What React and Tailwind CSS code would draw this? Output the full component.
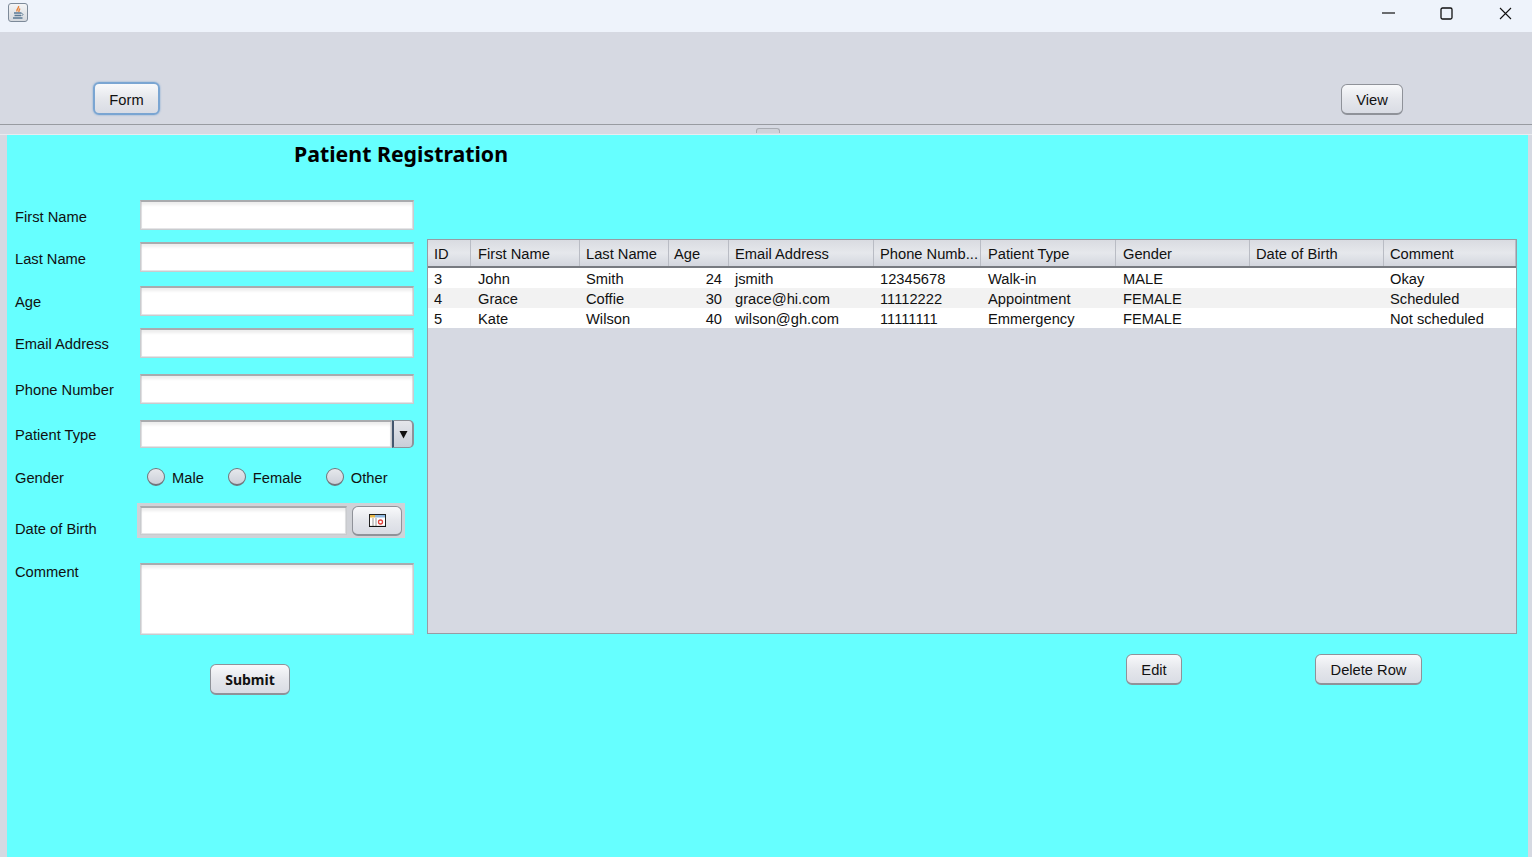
import React from "react";

const columns = ["ID", "First Name", "Last Name", "Age", "Email Address", "Phone Numb...", "Patient Type", "Gender", "Date of Birth", "Comment"];

const rows = [
  ["3", "John", "Smith", "24", "jsmith", "12345678", "Walk-in", "MALE", "", "Okay"],
  ["4", "Grace", "Coffie", "30", "grace@hi.com", "11112222", "Appointment", "FEMALE", "", "Scheduled"],
  ["5", "Kate", "Wilson", "40", "wilson@gh.com", "11111111", "Emmergency", "FEMALE", "", "Not scheduled"],
];

// left padding per column, the header and the cells start at the same x
const colPad = ["pl-[6px]", "pl-[7px]", "pl-[6px]", "pl-[5px]", "pl-[6px]", "pl-[6px]", "pl-[7px]", "pl-[7px]", "pl-[6px]", "pl-[6px]"];

const gridCols = "grid grid-cols-[43px_109px_89px_60px_145px_107px_135px_134px_134px_132px]";
const fieldBox = "bg-white border border-[#c9cbce] border-t-2 border-t-[#a9abae] shadow-[inset_0_3px_3px_rgba(0,0,0,0.07),inset_1px_0_0_#e4e5e7,inset_-1px_0_0_#e4e5e7,inset_0_-1px_0_#e4e5e7]";
const btnBox = "flex items-center justify-center rounded-[6px] border-[1.5px] border-[#8f9299] border-b-2 bg-gradient-to-b from-[#f8f9fb] via-[#e5e7ec] to-[#d9dce4] text-[14.7px] text-[#111]";

function JavaIcon() {
  return (
    <div className="ml-2 mt-[3px] w-5 h-[19px] rounded-[3px] border border-[#7d8a99] bg-gradient-to-b from-[#f4f5f6] to-[#d5d9de] flex items-center justify-center">
      <svg width="14" height="16" viewBox="0 0 14 16" fill="none">
        <path d="M7.5 1C8.5 3 5 4 6 6.5 M8.8 3.5C8.5 5 7.5 5.5 8 7" stroke="#e8833a" strokeWidth="1.4" />
        <path d="M3 8h7.5M3.5 10.5h6.5M2 13h9.5" stroke="#5b7a94" strokeWidth="1.3" />
        <path d="M10.5 8.5c2 0 2 2 0 2" stroke="#5b7a94" strokeWidth="0.9" />
      </svg>
    </div>
  );
}

function WindowControls() {
  return (
    <div className="flex items-start">
      <svg className="mr-[45px] mt-3" width="13" height="2" viewBox="0 0 13 2">
        <path d="M0 1h13" stroke="#111" strokeWidth="1.2" />
      </svg>
      <svg className="mr-[46px] mt-[7px]" width="13" height="13" viewBox="0 0 13 13" fill="none">
        <rect x="1" y="1" width="11" height="11" rx="1.5" stroke="#111" strokeWidth="1.3" />
      </svg>
      <svg className="mr-5 mt-[7px]" width="13" height="13" viewBox="0 0 13 13" fill="none">
        <path d="M1 1l11 11M12 1L1 12" stroke="#111" strokeWidth="1.1" />
      </svg>
    </div>
  );
}

function Row({ label, top, height, labelClass = "items-center pt-[3px]", children }) {
  return (
    <div className={`flex ${top} ${height}`}>
      <div className={`w-[125px] flex text-[14.7px] text-[#111] ${labelClass}`}>{label}</div>
      {children}
    </div>
  );
}

function Radio({ label }) {
  return (
    <label className="flex items-center gap-[7px]">
      <span className="w-[18px] h-[18px] rounded-full border-[1.5px] border-[#72757c] border-b-2 bg-gradient-to-b from-[#e6e8ec] to-[#ccd0d9]" />
      <span className="pt-[2px] text-[14.7px] text-[#111]">{label}</span>
    </label>
  );
}

function CalendarIcon() {
  return (
    <svg width="17" height="13" viewBox="0 0 17 13">
      <rect x="0.5" y="0.5" width="16" height="12" fill="#fff" stroke="#222" />
      <rect x="1" y="1" width="5" height="2.5" fill="#e9b949" />
      <rect x="6" y="1" width="10" height="2.5" fill="#8fb8e0" />
      <path d="M4 4v8M7 4v8" stroke="#999" />
      <circle cx="11.5" cy="8" r="2" fill="none" stroke="#e2413b" strokeWidth="1.3" />
      <path d="M0 12.5h17" stroke="#111" strokeWidth="1.2" />
    </svg>
  );
}

function PatientForm() {
  return (
    <div className="w-[420px] shrink-0 pl-2 flex flex-col">
      <div className="h-[65px] pl-[279px] pt-[5px]">
        <h1 className="font-['Noto_Sans'] font-bold text-[21.3px] leading-[28px] whitespace-nowrap text-black">Patient Registration</h1>
      </div>
      <Row label="First Name" height="h-[30px]" labelClass="items-center pt-[5px]">
        <input className={`w-[274px] ${fieldBox}`} />
      </Row>
      <Row label="Last Name" top="mt-3" height="h-[30px]" labelClass="items-center pt-[5px]">
        <input className={`w-[274px] ${fieldBox}`} />
      </Row>
      <Row label="Age" top="mt-[14px]" height="h-[30px]">
        <input className={`w-[274px] ${fieldBox}`} />
      </Row>
      <Row label="Email Address" top="mt-3" height="h-[30px]">
        <input className={`w-[274px] ${fieldBox}`} />
      </Row>
      <Row label="Phone Number" top="mt-4" height="h-[30px]">
        <input className={`w-[274px] ${fieldBox}`} />
      </Row>
      <Row label="Patient Type" top="mt-4" height="h-7">
        <div className="w-[274px] flex">
          <div className={`flex-1 ${fieldBox}`} />
          <div className="w-[22px] flex items-center justify-center rounded-r-[5px] border-l-2 border-l-[#44566e] border-y border-r-2 border-[#8f9299] bg-gradient-to-b from-[#e4e6eb] to-[#c9ced8]">
            <svg width="9" height="9" viewBox="0 0 9 9">
              <path d="M0.5 1h8L4.5 8.5z" fill="#111" />
            </svg>
          </div>
        </div>
      </Row>
      <Row label="Gender" top="mt-[18px]" height="h-[22px]" labelClass="items-center pt-[3px]">
        <div className="flex items-center gap-6 pl-[7px]">
          <Radio label="Male" />
          <Radio label="Female" />
          <Radio label="Other" />
        </div>
      </Row>
      <Row label="Date of Birth" top="mt-[15px]" height="h-[35px]" labelClass="items-center pt-[18px]">
        <div className="-ml-[3px] w-[268px] flex items-start gap-[5px] bg-[#d0d2d7] px-[3px] pt-[3px]">
          <div className={`w-[208px] h-[29px] ${fieldBox}`} />
          <button className={`w-[50px] h-[30px] ${btnBox}`}>
            <CalendarIcon />
          </button>
        </div>
      </Row>
      <Row label="Comment" top="mt-[25px]" height="h-[72px]" labelClass="items-start leading-[19px]">
        <textarea className={`w-[274px] resize-none ${fieldBox}`} />
      </Row>
      <div className="mt-[29px] ml-[195px]">
        <button className={`w-[80px] h-[31px] font-['Noto_Sans'] font-bold !text-[14px] pt-px ${btnBox}`}>Submit</button>
      </div>
    </div>
  );
}

function PatientTable() {
  return (
    <div className="w-[1090px] h-[395px] border border-[#989ba3] bg-[#d6d9e2] text-[14.7px] text-[#111]">
      <div className={`${gridCols} h-7 border-b-2 border-[#777a80]`}>
        {columns.map((col, j) => (
          <div key={col} className={`${colPad[j]} pt-[2px] flex items-center border-r border-[#b9bcc4] bg-gradient-to-b from-[#d9dbe1] via-[#e6e8ec] to-[#d3d6de] whitespace-nowrap overflow-hidden`}>
            {col}
          </div>
        ))}
      </div>
      {rows.map((row, i) => (
        <div key={row[0]} className={`${gridCols} h-5 ${i === 1 ? "bg-[#f2f2f2]" : "bg-white"}`}>
          {row.map((cell, j) => (
            <div key={j} className={`pb-[2px] flex items-center whitespace-nowrap ${j === 3 ? "justify-end pr-[7px]" : colPad[j]}`}>
              {cell}
            </div>
          ))}
        </div>
      ))}
    </div>
  );
}

export default function App() {
  return (
    <div className="w-full h-[857px] overflow-hidden flex flex-col bg-[#d6d9e2] font-['Liberation_Sans',sans-serif]">
      <div className="h-8 bg-[#eef3fb] flex justify-between">
        <JavaIcon />
        <WindowControls />
      </div>

      <div className="h-[92px] flex items-end justify-between pl-[93px] pr-[129px] pb-[9px]">
        <button className={`w-[67px] h-[33px] pt-[3px] !border-2 !border-[#7aa5d2] shadow-[0_0_2px_#7aa5d2] ${btnBox}`}>Form</button>
        <button className={`w-[62px] h-[31px] pt-[3px] ${btnBox}`}>View</button>
      </div>

      <div className="h-[11px] border-t border-[#989ba1] border-b border-b-[#e9ebef] flex justify-center pl-[3px]">
        <div className="mt-[3px] w-6 h-[5px] rounded-t-[3px] border border-b-0 border-[#a9acb3] bg-[#cfd2d9]" />
      </div>

      <div className="flex-1 ml-[7px] mr-1 bg-[#66ffff] flex">
        <PatientForm />
        <div className="pt-[104px]">
          <PatientTable />
          <div className="mt-5 flex pl-[699px]">
            <button className={`w-14 h-[31px] pt-[3px] ${btnBox}`}>Edit</button>
            <button className={`ml-[133px] w-[107px] h-[31px] pt-[3px] ${btnBox}`}>Delete Row</button>
          </div>
        </div>
      </div>
    </div>
  );
}
